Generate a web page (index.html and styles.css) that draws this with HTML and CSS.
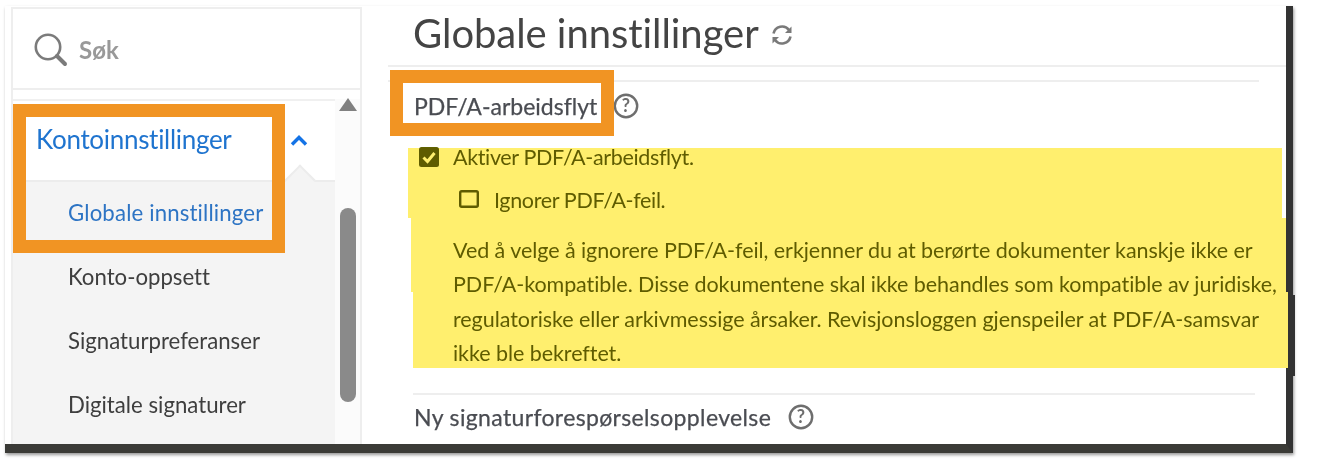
FILE: index.html
```html
<!DOCTYPE html>
<html lang="no">
<head>
  <meta charset="UTF-8">
  <title>Globale innstillinger</title>
  <link rel="stylesheet" href="styles.css">
</head>
<body>
  <div class="window">
    <aside class="sidebar">
      <div class="search">
        <svg class="search-icon" width="36" height="36" viewBox="0 0 36 36" fill="none" stroke="#7b7b7b">
          <circle cx="15" cy="15" r="12.2" stroke-width="2.6"/>
          <path d="M24 24l8 8" stroke-width="4" stroke-linecap="round"/>
        </svg>
        <span class="search-text">Søk</span>
      </div>
      <div class="nav-area">
        <nav class="menu">
          <div class="menu-head">
            <span class="menu-title">Kontoinnstillinger</span>
            <svg class="chevron" width="18" height="11" viewBox="0 0 18 11" fill="none" stroke="#1473e6" stroke-width="3.4">
              <path d="M2 9.5l7-7 7 7"/>
            </svg>
            <span class="notch"></span>
          </div>
          <ul class="menu-list">
            <li class="active">Globale innstillinger</li>
            <li>Konto-oppsett</li>
            <li>Signaturpreferanser</li>
            <li>Digitale signaturer</li>
          </ul>
        </nav>
        <div class="scrollbar">
          <span class="scroll-up"></span>
          <span class="scroll-thumb"></span>
        </div>
      </div>
    </aside>

    <main class="content">
      <header class="page-head">
        <h1>Globale innstillinger</h1>
        <svg class="refresh" width="24" height="24" viewBox="0 0 24 24" fill="none" stroke="#7a7a7a" stroke-width="2.6">
          <path d="M3.5 10.5A8.7 8.7 0 0 1 19 7"/>
          <path d="M20.5 13.5A8.7 8.7 0 0 1 5 17"/>
          <path d="M21.5 3.5v6.5H15z" fill="#7a7a7a" stroke="none"/>
          <path d="M2.5 20.5V14H9z" fill="#7a7a7a" stroke="none"/>
        </svg>
      </header>

      <section class="setting">
        <div class="setting-head">
          <h2>PDF/A-arbeidsflyt</h2>
          <svg class="help" width="26" height="26" viewBox="0 0 26 26">
            <circle cx="13" cy="13" r="11.2" fill="none" stroke="#6e6e6e" stroke-width="2.4"/>
            <text x="13" y="19" text-anchor="middle" class="help-mark">?</text>
          </svg>
        </div>
        <label class="check check-main">
          <svg width="20" height="20" viewBox="0 0 20 20">
            <rect width="20" height="20" rx="2.5" fill="#5f6200"/>
            <path d="M4.5 10.5l4 4 7-8.5" fill="none" stroke="#fff" stroke-width="3"/>
          </svg>
          <span>Aktiver PDF/A-arbeidsflyt.</span>
        </label>
        <label class="check check-sub">
          <svg width="20" height="20" viewBox="0 0 20 20">
            <rect x="1.2" y="1.2" width="17.6" height="15.6" rx="1.5" fill="none" stroke="#5f6200" stroke-width="2.4"/>
          </svg>
          <span>Ignorer PDF/A-feil.</span>
        </label>
        <p class="note">Ved å velge å ignorere PDF/A-feil, erkjenner du at berørte dokumenter kanskje ikke er<br>PDF/A-kompatible. Disse dokumentene skal ikke behandles som kompatible av juridiske,<br>regulatoriske eller arkivmessige årsaker. Revisjonsloggen gjenspeiler at PDF/A-samsvar<br>ikke ble bekreftet.</p>
      </section>

      <section class="setting-next">
        <h2>Ny signaturforespørselsopplevelse</h2>
        <svg class="help" width="26" height="26" viewBox="0 0 26 26">
          <circle cx="13" cy="13" r="11.2" fill="none" stroke="#6e6e6e" stroke-width="2.4"/>
          <text x="13" y="19" text-anchor="middle" class="help-mark">?</text>
        </svg>
      </section>
    </main>

    <!-- markeringer lagt oppå skjermbildet -->
    <div class="hl hl-1"></div>
    <div class="hl hl-2"></div>
    <div class="hl hl-3"></div>
    <div class="frame-jog"></div>
    <div class="hl-edge"></div>
    <div class="callout callout-menu"></div>
    <div class="callout callout-title"></div>
  </div>
</body>
</html>
```

FILE: styles.css
```css
*{margin: 0; padding: 0; box-sizing: border-box;}
ul{list-style: none;}

body{
  width: 1335px;
  height: 460px;
  background-color: #fff;
  padding: 6px 0 0 5px;
  overflow: hidden;
  font-family: "Lato", "Liberation Sans", sans-serif;
  font-variant-ligatures: none;
  color: #4b4b4b;
}

.window{
  width: 1288px;
  height: 447px;
  display: flex;
  background-color: #fff;
  border-right: 7px solid #333;
  border-bottom: 9px solid #3b3b37;
  box-shadow: 1px 2px 3px #999;
}

/* left column */
.sidebar{
  width: 351px;
  height: 437px;
  margin: 1px 0 0 6px;
  border: 2px solid #eee;
  border-bottom: 0;
  display: flex;
  flex-direction: column;
  overflow: hidden;
}

.search{
  height: 81px;
  flex: none;
  display: flex;
  align-items: center;
  gap: 10px;
  padding: 2px 0 0 20px;
  border-bottom: 2px solid #eee;
}
.search-text{
  font-size: 24px;
  font-weight: 700;
  color: #999;
}

.nav-area{
  flex: 1;
  display: flex;
  padding-top: 9px;
  min-height: 0;
}

.menu{
  width: 322px;
  border-top: 2px solid #f0f0f0;
  display: flex;
  flex-direction: column;
}
.menu-head{
  height: 81px;
  flex: none;
  position: relative;
  border-bottom: 2px solid #ececec;
  padding: 22px 0 0 23px;
  display: flex;
  align-items: flex-start;
}
.menu-title{
  font-size: 26px;
  line-height: 32px;
  letter-spacing: -0.3px;
  color: #1f74cf;
}
.chevron{
  position: absolute;
  left: 277px;
  top: 34px;
}
/* little arrow pointing at the open group */
.notch{
  position: absolute;
  left: 276px;
  top: 68px;
  width: 22px;
  height: 22px;
  background-color: #f4f4f4;
  border-top: 2px solid #ececec;
  border-left: 2px solid #ececec;
  transform: rotate(45deg);
}

.menu-list{
  flex: 1;
  background-color: #f4f4f4;
  padding: 15px 0 0 55px;
}
.menu-list li{
  height: 64px;
  font-size: 22.2px;
  line-height: 32px;
  color: #3e3e3e;
}
.menu-list .active{
  letter-spacing: 0.15px;
  color: #2d74c4;
}

.scrollbar{
  flex: 1;
  background-color: #fbfbfb;
  position: relative;
}
.scroll-up{
  position: absolute;
  left: 4px;
  top: -1px;
  border-left: 9px solid transparent;
  border-right: 9px solid transparent;
  border-bottom: 13px solid #808080;
}
.scroll-thumb{
  position: absolute;
  left: 5px;
  top: 109px;
  width: 16px;
  height: 194px;
  border-radius: 8px;
  background-color: #8a8a8a;
}

/* right column */
.content{
  flex: 1;
  min-width: 0;
  padding-left: 26px;
}

.page-head{
  height: 61px;
  display: flex;
  align-items: center;
  gap: 11px;
  padding: 0 0 5px 25px;
  border-bottom: 2px solid #eee;
}
.page-head h1{
  font-size: 40px;
  font-weight: 400;
  line-height: 54px;
  letter-spacing: -0.05px;
  color: #444;
}
.refresh{
  margin-top: 3px;
}

.setting{
  margin-top: 13px;
  margin-right: 27px;
  height: 311px;
  border-top: 2px solid #eee;
  padding-left: 26px;
}
.setting-head{
  display: flex;
  align-items: center;
  gap: 16px;
  height: 46px;
  margin-top: 1px;
}
h2{
  font-size: 23px;
  font-weight: 400;
  color: #4a4c52;
  -webkit-text-stroke: 0.25px #4a4c52;
}
.help-mark{
  font-size: 18px;
  font-weight: 700;
  fill: #6e6e6e;
}

.check{
  display: flex;
  align-items: center;
  font-size: 21.5px;
  line-height: 28px;
  letter-spacing: -0.35px;
  color: #5f6200;
}
.check-main{
  margin: 14px 0 0 5px;
  gap: 14px;
}
.check-sub{
  margin: 15px 0 0 45px;
  gap: 15px;
}
.note{
  margin: 19px 0 0 39px;
  font-size: 21.5px;
  line-height: 34.4px;
  letter-spacing: -0.06px;
  white-space: nowrap;
  color: #5f6200;
}

.setting-next{
  display: flex;
  align-items: center;
  gap: 17px;
  height: 46px;
  margin: 2px 31px 0 25px;
  padding-left: 1px;
  border-top: 2px solid #eee;
}
.setting-next h2{
  letter-spacing: 0.36px;
}

/* yellow marker and orange callouts over the screenshot */
.hl{
  position: absolute;
  background-color: #ffef6e;
  mix-blend-mode: multiply;
}
.hl-1{ left: 408px; top: 148px; width: 874px; height: 70px; }
.hl-2{ left: 411px; top: 218px; width: 875px; height: 74px; }
.hl-3{ left: 413px; top: 292px; width: 873px; height: 76px; }

.hl-edge{
  position: absolute;
  left: 1286px;
  top: 292px;
  width: 2px;
  height: 76px;
  background-color: #ffef6e;
}
.frame-jog{
  position: absolute;
  left: 1288px;
  top: 295px;
  width: 7px;
  height: 81px;
  background-color: #333;
}

.callout{
  position: absolute;
  border: 13px solid #f19423;
}
.callout-menu{ left: 13px; top: 104px; width: 272px; height: 149px; }
.callout-title{ left: 390px; top: 70px; width: 224px; height: 66px; }
```
